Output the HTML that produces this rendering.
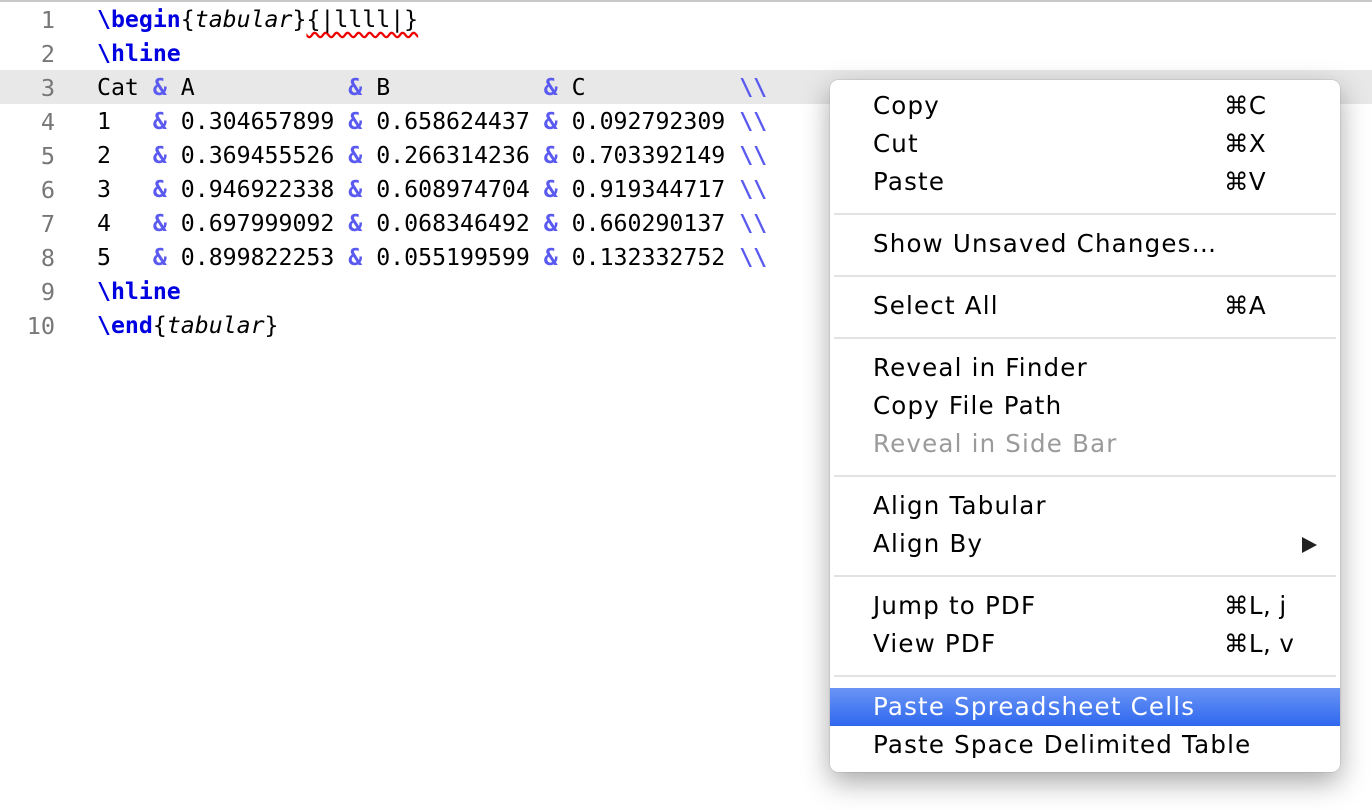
<!DOCTYPE html>
<html><head><meta charset="utf-8"><style>
body{margin:0;width:1372px;height:810px;background:#fff;position:relative;overflow:hidden;font-family:"DejaVu Sans Mono","Liberation Mono",monospace}
.top{position:absolute;left:0;top:0;width:1372px;height:2px;background:#c8c8c8}
.hl{position:absolute;left:0;top:70px;width:1372px;height:34px;background:#e8e8e8}
.ln{position:absolute;left:0;width:55px;text-align:right;color:#777;font-size:23.5px;line-height:34px}
.cd{position:absolute;left:97px;font-size:23.2px;line-height:34px;white-space:pre;color:#000}
.k{color:#0000e0;font-weight:bold}.a{color:#5a5af0;font-weight:bold}.i{font-style:italic}
.sq{text-decoration:underline wavy #e00;text-underline-offset:4px;text-decoration-skip-ink:none}
.menu{position:absolute;left:830px;top:80px;width:510px;height:692px;background:#fff;border-radius:8px;box-shadow:0 10px 28px rgba(0,0,0,.35),0 0 1px rgba(0,0,0,.4);font-family:"DejaVu Sans","Liberation Sans",sans-serif;font-size:24.5px;letter-spacing:1.2px}
.it{position:absolute;left:0;width:510px;height:38px;line-height:38px;padding-left:43px;box-sizing:border-box;color:#000}
.it .s{position:absolute;left:394px;top:0;letter-spacing:0.4px}
.sep{position:absolute;left:4px;width:502px;height:2px;background:#e2e2e2}
.dis{color:#9a9a9a}
.sel{background:linear-gradient(#6a94f5,#2f68ef);color:#fff}
.arr{position:absolute;left:472px;top:12px;width:0;height:0;border-left:15px solid #222;border-top:8px solid transparent;border-bottom:8px solid transparent}
</style></head><body>
<div class="top"></div>
<div class="hl"></div>
<div class="ln" style="top:3px">1</div><div class="cd" style="top:3px"><span class="k">\begin</span>{<span class="i">tabular</span>}<span class="sq">{|llll|}</span></div>
<div class="ln" style="top:37px">2</div><div class="cd" style="top:37px"><span class="k">\hline</span></div>
<div class="ln" style="top:71px">3</div><div class="cd" style="top:71px">Cat <span class="a">&amp;</span> A           <span class="a">&amp;</span> B           <span class="a">&amp;</span> C           <span class="a">\\</span></div>
<div class="ln" style="top:105px">4</div><div class="cd" style="top:105px">1   <span class="a">&amp;</span> 0.304657899 <span class="a">&amp;</span> 0.658624437 <span class="a">&amp;</span> 0.092792309 <span class="a">\\</span></div>
<div class="ln" style="top:139px">5</div><div class="cd" style="top:139px">2   <span class="a">&amp;</span> 0.369455526 <span class="a">&amp;</span> 0.266314236 <span class="a">&amp;</span> 0.703392149 <span class="a">\\</span></div>
<div class="ln" style="top:173px">6</div><div class="cd" style="top:173px">3   <span class="a">&amp;</span> 0.946922338 <span class="a">&amp;</span> 0.608974704 <span class="a">&amp;</span> 0.919344717 <span class="a">\\</span></div>
<div class="ln" style="top:207px">7</div><div class="cd" style="top:207px">4   <span class="a">&amp;</span> 0.697999092 <span class="a">&amp;</span> 0.068346492 <span class="a">&amp;</span> 0.660290137 <span class="a">\\</span></div>
<div class="ln" style="top:241px">8</div><div class="cd" style="top:241px">5   <span class="a">&amp;</span> 0.899822253 <span class="a">&amp;</span> 0.055199599 <span class="a">&amp;</span> 0.132332752 <span class="a">\\</span></div>
<div class="ln" style="top:275px">9</div><div class="cd" style="top:275px"><span class="k">\hline</span></div>
<div class="ln" style="top:309px">10</div><div class="cd" style="top:309px"><span class="k">\end</span>{<span class="i">tabular</span>}</div>

<div class="menu">
<div class="it" style="top:7px">Copy<span class="s">⌘C</span></div>
<div class="it" style="top:45px">Cut<span class="s">⌘X</span></div>
<div class="it" style="top:83px">Paste<span class="s">⌘V</span></div>
<div class="sep" style="top:133px"></div>
<div class="it" style="top:145px">Show Unsaved Changes…</div>
<div class="sep" style="top:195px"></div>
<div class="it" style="top:207px">Select All<span class="s">⌘A</span></div>
<div class="sep" style="top:257px"></div>
<div class="it" style="top:269px">Reveal in Finder</div>
<div class="it" style="top:307px">Copy File Path</div>
<div class="it dis" style="top:345px">Reveal in Side Bar</div>
<div class="sep" style="top:395px"></div>
<div class="it" style="top:407px">Align Tabular</div>
<div class="it" style="top:445px">Align By<span class="arr"></span></div>
<div class="sep" style="top:495px"></div>
<div class="it" style="top:507px">Jump to PDF<span class="s">⌘L, j</span></div>
<div class="it" style="top:545px">View PDF<span class="s">⌘L, v</span></div>
<div class="sep" style="top:595px"></div>
<div class="it sel" style="top:608px">Paste Spreadsheet Cells</div>
<div class="it" style="top:646px">Paste Space Delimited Table</div>
</div>
</body></html>
